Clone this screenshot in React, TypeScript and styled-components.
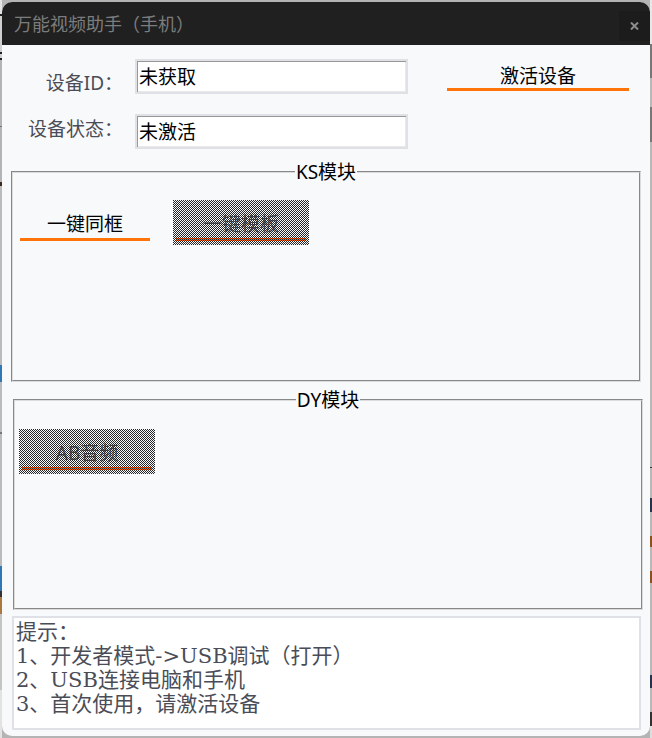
import React from "react";
import styled, { createGlobalStyle, css } from "styled-components";

const GlobalStyle = createGlobalStyle`
  *, *::before, *::after { box-sizing: border-box; }
  body {
    margin: 0;
    font-family: "Noto Sans", "Noto Sans CJK SC", sans-serif;
    font-size: 19px;
    line-height: 24px;
    color: #000;
  }
  button, input, textarea { font: inherit; color: inherit; }
`;

const Desktop = styled.div`
  min-height: 100vh;
  display: flex;
  padding: 2px;
  background:
    linear-gradient(
      #e4e4e4 0 14px, #222 0 16px, #d0d0d0 0 52px, #222 0 54px, #d0d0d0 0 58px,
      #222 0 60px, #b4b4b6 0 126px, #777 0 127px, #b4b4b6 0 182px, #3a2a20 0 186px,
      #bbb 0 365px, #2f78b5 0 382px, #bbb 0 432px, #777 0 434px, #bbb 0 566px,
      #2f78b5 0 591px, #333 0 597px, #a9793f 0 614px, #c4c4c4 0 690px, #e2e2e2 0
    ) left / 2px 100% no-repeat,
    linear-gradient(
      #e8e8e8 0 44px, #777 0 78px, #b8b8b8 0 107px, #777 0 142px, #b8b8b8 0 467px,
      #333 0 468px, #b8b8b8 0 498px, #26334d 0 512px, #b8b8b8 0 536px, #8a5220 0 547px,
      #b8b8b8 0 571px, #8a5220 0 583px, #b8b8b8 0 675px, #26334d 0 688px,
      #b8b8b8 0 712px, #333 0 726px, #dedede 0
    ) right / 2px 100% no-repeat,
    #b4b4b4;
`;

const AppWindow = styled.main`
  flex: 1;
  min-width: 0;
  display: flex;
  flex-direction: column;
  overflow: hidden;
  border-radius: 10px;
  background: #f8f9fb;
`;

const TitleBar = styled.header`
  display: flex;
  align-items: center;
  justify-content: space-between;
  height: 43px;
  padding-left: 12px;
  background: #202020;
`;

const Title = styled.h1`
  margin: 0;
  font-size: 18px;
  font-weight: 400;
  line-height: 42px;
  color: #7c7c7c;
`;

const CloseButton = styled.button`
  display: flex;
  align-items: center;
  justify-content: center;
  width: 31px;
  height: 30px;
  margin-top: 4px;
  padding: 0;
  border: 0;
  background: #1c1c1c;
  color: #8c8c8c;
`;

const DeviceForm = styled.form`
  display: flex;
  align-items: flex-start;
  gap: 36px;
  padding: 5px 18px 0 26px;
`;

const Fields = styled.div`
  flex: 1;
  min-width: 0;
  display: flex;
  flex-direction: column;
  gap: 19px;
  padding-top: 9px;
`;

const Field = styled.div`
  display: flex;
  align-items: flex-start;
  gap: 12px;
`;

const FieldLabel = styled.label<{ $low?: boolean }>`
  flex: none;
  width: 95px;
  padding-top: ${(p) => (p.$low ? 12 : 3)}px;
  text-align: right;
  white-space: nowrap;
  color: #4a4d57;
`;

const TextBox = styled.input`
  flex: 1;
  min-width: 0;
  width: 100%;
  height: 35px;
  padding: 1px 2px 2px;
  border: 2px solid #dfe1e6;
  outline: 0;
  background: #fff;
  box-shadow: inset 1px 1px #989898, inset -1px -1px #e9e9e9;
`;

const ActionButton = styled.button<{ $wide?: boolean }>`
  position: relative;
  flex: none;
  width: ${(p) => (p.$wide ? 188 : 136)}px;
  height: 45px;
  padding: ${(p) => (p.$wide ? 7 : 3)}px 0 0;
  border: 0;
  background: transparent;

  &::before {
    content: "";
    position: absolute;
    inset: auto 3px 4px;
    height: 3px;
    background: #ff7308;
  }

  ${(p) =>
    p.disabled &&
    css`
      color: #565b66;

      &::after {
        content: "";
        position: absolute;
        inset: 0;
        background: conic-gradient(transparent 25%, #262626 0 50%, transparent 0 75%, #262626 0)
          0 0 / 2px 2px;
      }
    `}
`;

const Group = styled.fieldset<{ $shifted?: boolean }>`
  display: flex;
  gap: 20px;
  min-width: 0;
  height: 222px;
  margin: ${(p) => (p.$shifted ? "6px 7px 0 11px" : "11px 9px 0")};
  padding: ${(p) => (p.$shifted ? 17 : 16)}px 4px;
  border: 2px groove #dcdcdc;
`;

const GroupTitle = styled.legend`
  margin: 0 auto;
  padding: 0 1px;
`;

const Tips = styled.textarea`
  display: block;
  height: 114px;
  margin: 6px 9px 6px 10px;
  padding: 2px;
  border: 2px solid #dfe1e6;
  outline: 0;
  resize: none;
  overflow: hidden;
  background: #fff;
  color: #4a4d57;
  font-family: "DejaVu Serif", "Noto Sans CJK SC", serif;
  font-size: 21px;
  line-height: 24px;
`;

const tips = `提示：
1、开发者模式->USB调试（打开）
2、USB连接电脑和手机
3、首次使用，请激活设备`;

export default function App() {
  return (
    <Desktop>
      <GlobalStyle />
      <AppWindow>
        <TitleBar>
          <Title>万能视频助手（手机）</Title>
          <CloseButton type="button" aria-label="关闭">
            <svg width="9" height="8" viewBox="0 0 9 8" fill="none" stroke="currentColor" strokeWidth="2">
              <path d="M1 .5L8 7.5M8 .5L1 7.5" />
            </svg>
          </CloseButton>
        </TitleBar>
        <DeviceForm onSubmit={(e) => e.preventDefault()}>
          <Fields>
            <Field>
              <FieldLabel htmlFor="device-id" $low>设备ID：</FieldLabel>
              <TextBox id="device-id" defaultValue="未获取" />
            </Field>
            <Field>
              <FieldLabel htmlFor="device-state">设备状态：</FieldLabel>
              <TextBox id="device-state" defaultValue="未激活" />
            </Field>
          </Fields>
          <ActionButton $wide>激活设备</ActionButton>
        </DeviceForm>
        <Group>
          <GroupTitle>KS模块</GroupTitle>
          <ActionButton type="button">一键同框</ActionButton>
          <ActionButton type="button" disabled>一键模板</ActionButton>
        </Group>
        <Group $shifted>
          <GroupTitle>DY模块</GroupTitle>
          <ActionButton type="button" disabled>AB音频</ActionButton>
        </Group>
        <Tips aria-label="提示" readOnly value={tips} />
      </AppWindow>
    </Desktop>
  );
}
